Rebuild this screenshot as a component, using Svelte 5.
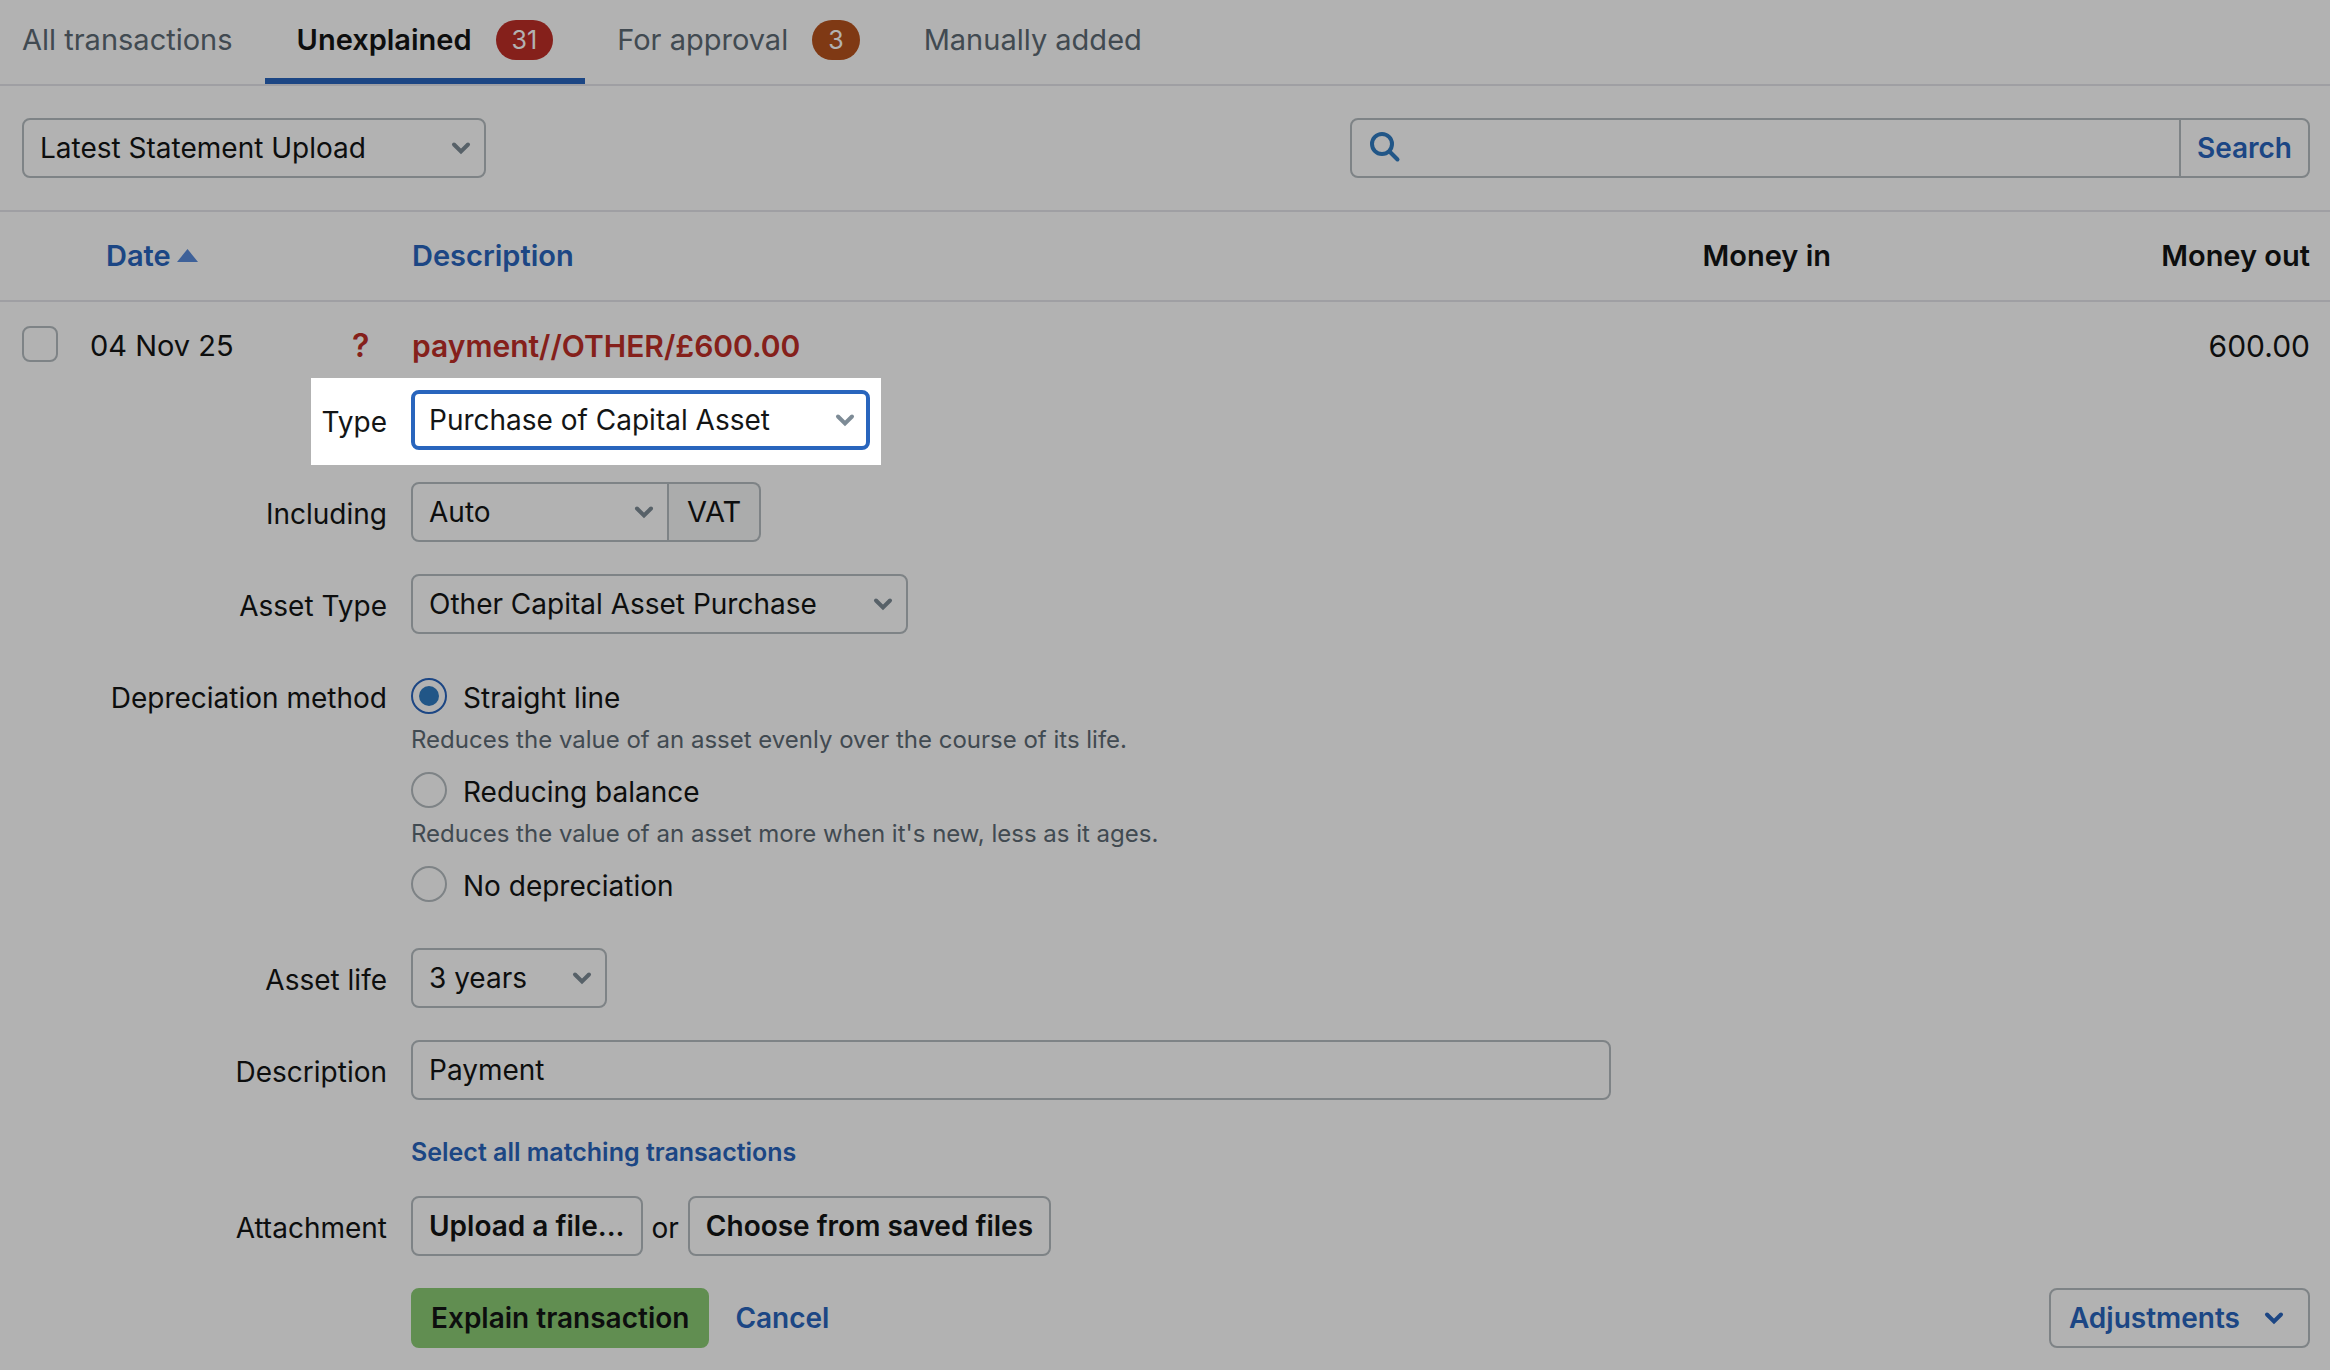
<script>
  let source = $state('latest');
  let query = $state('');
  let type = $state('capital');
  let vat = $state('auto');
  let assetType = $state('other');
  let method = $state('straight');
  let life = $state('3');
  let description = $state('Payment');

  const tabs = [
    { label: 'All transactions' },
    { label: 'Unexplained', count: 31, tone: 'red', current: true },
    { label: 'For approval', count: 3, tone: 'orange' },
    { label: 'Manually added' }
  ];

  const methods = [
    {
      id: 'straight',
      label: 'Straight line',
      hint: 'Reduces the value of an asset evenly over the course of its life.'
    },
    {
      id: 'reducing',
      label: 'Reducing balance',
      hint: "Reduces the value of an asset more when it's new, less as it ages."
    },
    { id: 'none', label: 'No depreciation' }
  ];
</script>

{#snippet chevron()}
  <svg class="chevron" viewBox="0 0 20 14" aria-hidden="true">
    <path d="M3 3.5 L10 10.5 L17 3.5" />
  </svg>
{/snippet}

<main>
  <nav class="tabs" aria-label="Transaction filters">
    {#each tabs as tab}
      <a href="#transactions" class="tab" class:current={tab.current} aria-current={tab.current ? 'page' : undefined}>
        {tab.label}
        {#if tab.count}<span class="badge {tab.tone}">{tab.count}</span>{/if}
      </a>
    {/each}
  </nav>

  <div class="toolbar">
    <span class="select source">
      <select aria-label="Statement" bind:value={source}>
        <option value="latest">Latest Statement Upload</option>
      </select>
      {@render chevron()}
    </span>
    <form class="search" role="search" onsubmit={(e) => e.preventDefault()}>
      <svg class="glass" viewBox="0 0 32 32" aria-hidden="true">
        <circle cx="13" cy="13" r="10" />
        <path d="M20.5 20.5 L28.5 28.5" />
      </svg>
      <input type="search" aria-label="Search transactions" bind:value={query} />
      <button type="submit">Search</button>
    </form>
  </div>

  <table id="transactions">
    <colgroup>
      <col class="c-check" /><col class="c-date" /><col class="c-flag" /><col /><col class="c-in" /><col class="c-out" />
    </colgroup>
    <thead>
      <tr>
        <th colspan="3" class="date-head">
          <a href="#transactions">Date<svg class="sort" viewBox="0 0 21 13" aria-hidden="true"><path d="M10.5 0 L21 13 H0 Z" /></svg></a>
        </th>
        <th><a href="#transactions">Description</a></th>
        <th class="num">Money in</th>
        <th class="num">Money out</th>
      </tr>
    </thead>
    <tbody>
      <tr>
        <td class="check"><input type="checkbox" aria-label="Select transaction" /></td>
        <td>04 Nov 25</td>
        <td class="flag">?</td>
        <td class="payee">payment//OTHER/£600.00</td>
        <td class="num"></td>
        <td class="num">600.00</td>
      </tr>
    </tbody>
  </table>

  <form class="explain" onsubmit={(e) => e.preventDefault()}>
    <div class="row spotlight">
      <label for="type">Type</label>
      <span class="select type">
        <select id="type" bind:value={type}>
          <option value="capital">Purchase of Capital Asset</option>
        </select>
        {@render chevron()}
      </span>
    </div>

    <div class="row">
      <label for="vat">Including</label>
      <div class="group">
        <span class="select vat">
          <select id="vat" bind:value={vat}>
            <option value="auto">Auto</option>
          </select>
          {@render chevron()}
        </span>
        <span class="addon">VAT</span>
      </div>
    </div>

    <div class="row">
      <label for="asset-type">Asset Type</label>
      <span class="select asset">
        <select id="asset-type" bind:value={assetType}>
          <option value="other">Other Capital Asset Purchase</option>
        </select>
        {@render chevron()}
      </span>
    </div>

    <div class="row" role="radiogroup" aria-labelledby="method-label">
      <span class="label" id="method-label">Depreciation method</span>
      <div class="options">
        {#each methods as m}
          <div class="option">
            <label class="radio">
              <input type="radio" name="method" value={m.id} bind:group={method} />
              {m.label}
            </label>
            {#if m.hint}<p>{m.hint}</p>{/if}
          </div>
        {/each}
      </div>
    </div>

    <div class="row">
      <label for="life">Asset life</label>
      <span class="select life">
        <select id="life" bind:value={life}>
          <option value="3">3 years</option>
        </select>
        {@render chevron()}
      </span>
    </div>

    <div class="row">
      <label for="description">Description</label>
      <input class="text" id="description" type="text" bind:value={description} />
    </div>

    <div class="row matching">
      <a href="#transactions">Select all matching transactions</a>
    </div>

    <div class="row">
      <span class="label">Attachment</span>
      <div class="files">
        <button type="button" class="btn">Upload a file...</button>
        <span class="or">or</span>
        <button type="button" class="btn">Choose from saved files</button>
      </div>
    </div>

    <div class="row last">
      <div class="actions">
        <button type="submit" class="btn primary">Explain transaction</button>
        <a href="#transactions" class="cancel">Cancel</a>
        <button type="button" class="btn adjust">Adjustments {@render chevron()}</button>
      </div>
    </div>
  </form>
</main>

<style>
  :global(body) {
    margin: 0;
    background: #fff;
  }

  main {
    --ink: #131515;
    --muted: #5d6b75;
    --blue: #2965bd;
    --red: #bf2e27;
    --edge: #b5bcc0;
    --rule: #e4e4ea;
    overflow: hidden;
    font: 400 28px/40px Inter, 'Liberation Sans', sans-serif;
    color: var(--ink);
  }

  *,
  *::before {
    box-sizing: border-box;
  }

  input,
  select,
  button {
    margin: 0;
    font: inherit;
    color: inherit;
  }

  a {
    color: var(--blue);
    text-decoration: none;
  }

  /* Tabs */
  .tabs {
    display: flex;
    border-bottom: 2px solid var(--rule);
    font-size: 29px;
  }

  .tab {
    display: flex;
    align-items: center;
    gap: 24px;
    padding: 20px 32px 18px;
    border-bottom: 6px solid transparent;
    color: var(--muted);
    white-space: nowrap;
  }

  .tab:first-child {
    padding-left: 22px;
  }

  .tab.current {
    border-color: var(--blue);
    color: var(--ink);
    font-weight: 600;
  }

  .badge {
    padding: 0 16px;
    border-radius: 20px;
    color: #fff;
    font-size: 25px;
    font-weight: 400;
  }

  .red {
    background: var(--red);
  }

  .orange {
    background: #b7521d;
  }

  /* Toolbar */
  .toolbar {
    display: flex;
    justify-content: space-between;
    padding: 32px 20px 32px 22px;
    border-bottom: 2px solid var(--rule);
  }

  .select {
    display: grid;
    align-items: center;
  }

  .select > :global(*) {
    grid-area: 1 / 1;
  }

  select {
    appearance: none;
    width: 100%;
    height: 60px;
    padding: 0 48px 0 16px;
    border: 2px solid var(--edge);
    border-radius: 8px;
    background: #fff;
    outline: none;
  }

  .chevron {
    width: 20px;
    height: 14px;
    fill: none;
    stroke: #7d8b96;
    stroke-width: 4;
    stroke-linecap: round;
  }

  .select .chevron {
    justify-self: end;
    margin-right: 15px;
    pointer-events: none;
  }

  .source {
    width: 464px;
  }

  .search {
    display: flex;
    align-items: center;
    width: 960px;
    height: 60px;
    border: 2px solid var(--edge);
    border-radius: 8px;
  }

  .glass {
    flex: none;
    width: 32px;
    height: 32px;
    margin: 0 12px 2px 17px;
    fill: none;
    stroke: #307bc2;
    stroke-width: 4;
    stroke-linecap: round;
  }

  .search input {
    flex: 1;
    min-width: 0;
    border: 0;
    background: none;
    outline: none;
  }

  .search button {
    align-self: stretch;
    padding: 0 16px;
    border: 0;
    border-left: 2px solid var(--edge);
    background: none;
    color: var(--blue);
    font-weight: 600;
  }

  /* Transactions */
  table {
    width: 100%;
    border-collapse: separate;
    border-spacing: 0;
    table-layout: fixed;
    font-size: 29px;
  }

  .c-check {
    width: 90px;
  }

  .c-date {
    width: 256px;
  }

  .c-flag {
    width: 66px;
  }

  .c-in {
    width: 400px;
  }

  .c-out {
    width: 499px;
  }

  th,
  td {
    padding: 0;
    text-align: left;
    white-space: nowrap;
  }

  th {
    height: 90px;
    border-bottom: 2px solid var(--rule);
    font-weight: 600;
  }

  td {
    height: 76px;
    padding-top: 14px;
    vertical-align: top;
    line-height: 60px;
  }

  .date-head {
    padding-left: 106px;
  }

  .sort {
    width: 21px;
    height: 13px;
    margin-left: 6px;
    vertical-align: 4px;
    fill: #5a8bdb;
  }

  .num {
    text-align: right;
  }

  .num:last-child {
    padding-right: 20px;
  }

  td.num,
  .payee {
    font-size: 30px;
  }

  .check {
    padding: 24px 0 0 22px;
  }

  input[type='checkbox'],
  input[type='radio'] {
    appearance: none;
    display: grid;
    place-items: center;
    flex: none;
    width: 36px;
    height: 36px;
    border: 2px solid var(--edge);
    border-radius: 8px;
    background: #fff;
  }

  .flag,
  .payee {
    color: var(--red);
    font-weight: 600;
  }

  .flag {
    padding-left: 6px;
    font-size: 32px;
  }

  /* Explanation form */
  .row {
    display: grid;
    grid-template-columns: 387px minmax(0, 1fr);
    column-gap: 24px;
    padding-bottom: 32px;
    padding-right: 20px;
  }

  .row > label,
  .label {
    padding-top: 12px;
    text-align: right;
    white-space: nowrap;
  }

  /* The highlighted row dims the rest of the page around it. */
  .row.spotlight {
    position: relative;
    grid-template-columns: 76px 459px;
    width: fit-content;
    margin: 0 0 17px 311px;
    padding: 12px 11px 15px 0;
    background: #fff;
    box-shadow: 0 0 0 4000px rgb(0 0 0 / 0.3);
  }

  .type select {
    padding-left: 14px;
    border: 4px solid var(--blue);
  }

  .group,
  .files,
  .actions {
    display: flex;
  }

  .vat {
    width: 258px;
  }

  .vat select {
    border-radius: 8px 0 0 8px;
  }

  .addon {
    padding: 0 18px;
    border: 2px solid var(--edge);
    border-left: 0;
    border-radius: 0 8px 8px 0;
    background: #f5f6f6;
    font-size: 29px;
    line-height: 56px;
  }

  .asset {
    width: 497px;
  }

  .life {
    width: 196px;
  }

  .options {
    padding-top: 8px;
  }

  .option {
    height: 94px;
  }

  .option:last-child {
    height: 54px;
  }

  .radio {
    display: flex;
    gap: 16px;
    height: 50px;
    padding-top: 4px;
  }

  .radio input[type='radio'] {
    border-radius: 50%;
  }

  .radio input:checked {
    border-color: var(--blue);
  }

  .radio input:checked::before {
    content: '';
    width: 20px;
    height: 20px;
    border-radius: 50%;
    background: #307bc2;
  }

  .option p {
    margin: 0;
    color: var(--muted);
    font-size: 24px;
    line-height: 32px;
  }

  .text {
    width: 100%;
    max-width: 1200px;
    height: 60px;
    padding: 0 16px;
    border: 2px solid var(--edge);
    border-radius: 8px;
    background: #fff;
    outline: none;
  }

  .matching {
    padding-bottom: 24px;
  }

  .matching a {
    grid-column: 2;
    font-size: 25px;
    font-weight: 600;
  }

  .btn {
    height: 60px;
    padding: 0 16px;
    border: 2px solid var(--edge);
    border-radius: 8px;
    background: #fff;
    font-weight: 600;
    white-space: nowrap;
  }

  .or {
    padding: 12px 9px 0;
  }

  .row.last {
    padding-bottom: 22px;
  }

  .actions {
    grid-column: 2;
    align-items: center;
  }

  .primary {
    padding: 0 18px;
    border-color: #8ccc75;
    background: #8ccc75;
  }

  .cancel {
    margin-left: 26px;
    font-weight: 600;
  }

  .adjust {
    display: flex;
    align-items: center;
    gap: 24px;
    margin-left: auto;
    padding: 0 24px 0 18px;
    color: var(--blue);
  }

  .adjust .chevron {
    stroke: var(--blue);
  }
</style>
